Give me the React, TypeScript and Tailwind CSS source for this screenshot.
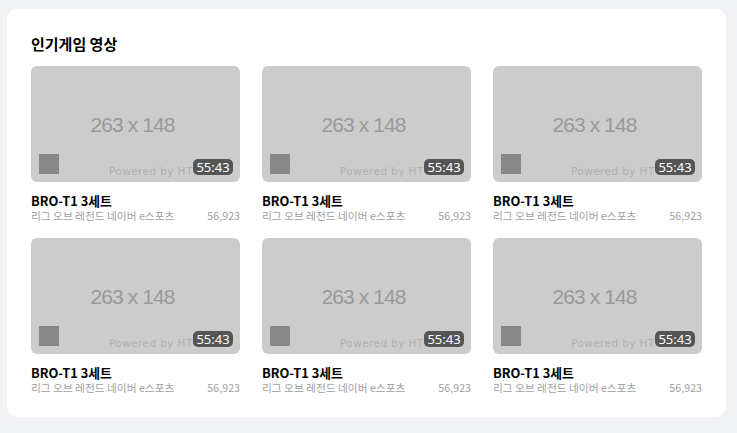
import React from "react";

const items = Array.from({ length: 6 });

function Thumb() {
  return (
    <div className="relative h-[116px] w-full overflow-hidden rounded-[6px] bg-[#cccccc]">
      <div className="absolute inset-0 flex items-center justify-center pr-[6px]">
        <span
          className="text-[21px] leading-none tracking-[-0.9px] text-[#999999]"
          style={{ fontFamily: "'Liberation Sans', Arial, sans-serif" }}
        >
          263 x 148
        </span>
      </div>
      <div className="absolute left-[8px] bottom-[8px] h-[20px] w-[20px] bg-[#888888]" />
      <div className="absolute left-[78px] right-[47px] bottom-[4px] overflow-hidden">
        <span
          className="block whitespace-nowrap text-[10.5px] leading-[14px] tracking-[0.4px] text-[#b0b0b0]"
          style={{ fontFamily: "'DejaVu Sans', sans-serif" }}
        >
          Powered by HTML.COM
        </span>
      </div>
      <span
        className="absolute right-[7px] bottom-[7px] flex h-[16px] w-[40px] items-center justify-center rounded-[5px] bg-[#555555] text-[13px] leading-none text-white"
        style={{ fontFamily: "'Noto Sans', 'Open Sans', sans-serif" }}
      >
        55:43
      </span>
    </div>
  );
}

export default function App() {
  return (
    <div
      className="h-[433px] w-[737px] bg-[#f1f2f6] px-[7px] pt-[9px]"
      style={{ fontFamily: "'Noto Sans CJK KR', 'Noto Sans', sans-serif" }}
    >
      <div className="h-[408px] w-[719px] rounded-[10px] bg-white px-[24px] pt-[24px]">
        <h2 className="mb-[11px] text-[15px] font-bold leading-[22px] text-black">인기게임 영상</h2>
        <div className="grid grid-cols-3 gap-x-[22px] gap-y-[15px]">
          {items.map((_, i) => (
            <div key={i} className="flex flex-col">
              <Thumb />
              <div className="mt-[10px] text-[12.8px] font-bold leading-[17px] text-black">BRO-T1 3세트</div>
              <div className="flex items-center justify-between text-[10.7px] leading-[14px] text-[#a0a0a0]">
                <span>리그 오브 레전드 네이버 e스포츠</span>
                <span>56,923</span>
              </div>
            </div>
          ))}
        </div>
      </div>
    </div>
  );
}
